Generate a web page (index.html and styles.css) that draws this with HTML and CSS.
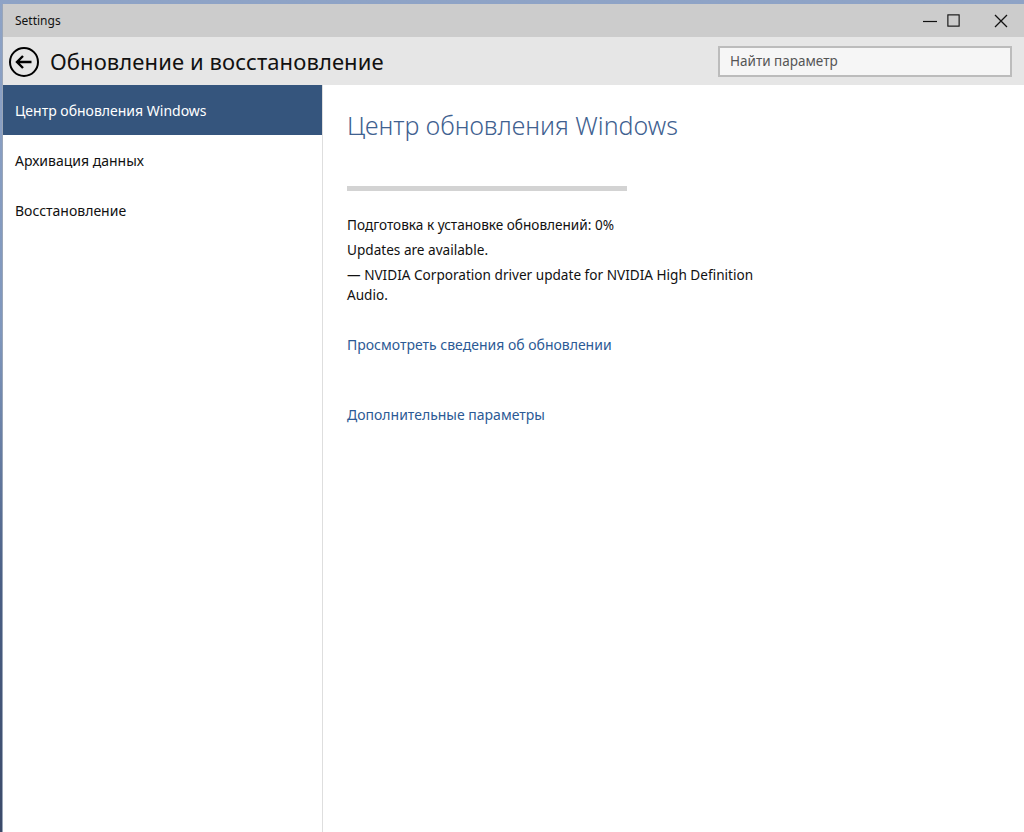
FILE: index.html
```html
<!DOCTYPE html>
<html lang="ru">
<head>
<meta charset="utf-8">
<title>Settings</title>
<link rel="stylesheet" href="styles.css">
</head>
<body>
<div class="desktop">
  <div class="window">
    <div class="titlebar">
      <span class="app-name">Settings</span>
      <div class="controls">
        <span class="ctl ctl-min"><svg width="16" height="16" viewBox="0 0 16 16"><path d="M1 8.5h14" stroke="#111" stroke-width="1.2"/></svg></span>
        <span class="ctl ctl-max"><svg width="15" height="15" viewBox="0 0 16 16"><rect x="2" y="2" width="12" height="12" fill="none" stroke="#111" stroke-width="1.2"/></svg></span>
        <span class="ctl ctl-close"><svg width="16" height="16" viewBox="0 0 16 16"><path d="M2 2L14 14M14 2L2 14" stroke="#111" stroke-width="1.3"/></svg></span>
      </div>
    </div>
    <div class="header">
      <span class="back"><svg width="32" height="32" viewBox="0 0 32 32"><circle cx="16" cy="16" r="14" fill="none" stroke="#000" stroke-width="2"/><path d="M23.5 16H9M15 10L9 16L15 22" fill="none" stroke="#000" stroke-width="2.4"/></svg></span>
      <h1 class="page-title">Обновление и восстановление</h1>
      <div class="search">Найти параметр</div>
    </div>
    <div class="main">
      <nav class="nav">
        <div class="nav-item active">Центр обновления Windows</div>
        <div class="nav-item">Архивация данных</div>
        <div class="nav-item">Восстановление</div>
      </nav>
      <section class="content">
        <h2 class="section-title">Центр обновления Windows</h2>
        <div class="progress"></div>
        <p class="status">Подготовка к установке обновлений: 0%</p>
        <p class="status">Updates are available.</p>
        <p class="status wrap">— NVIDIA Corporation driver update for NVIDIA High Definition Audio.</p>
        <a class="link link-first" href="#">Просмотреть сведения об обновлении</a>
        <a class="link link-second" href="#">Дополнительные параметры</a>
      </section>
    </div>
  </div>
</div>
</body>
</html>
```

FILE: styles.css
```css
html, body {
  margin: 0;
  padding: 0;
  height: 100%;
}
body {
  font-family: "Noto Sans", "Open Sans", sans-serif;
  color: #000;
  overflow: hidden;
}
.desktop {
  height: 832px;
  padding: 4px 0 0 2px;
  box-sizing: border-box;
  background: linear-gradient(180deg, #8ea3c6 0%, #7f97bd 40%, #4a5f85 70%, #3b4a69 100%);
}
.window {
  height: 100%;
  display: flex;
  flex-direction: column;
  background: #fff;
  border-left: 1px solid #9aa6b8;
}
.titlebar {
  height: 33px;
  flex: none;
  background: #cccccc;
  display: flex;
  align-items: center;
  justify-content: space-between;
}
.app-name {
  font-size: 12px;
  padding-left: 12px;
  color: #111;
}
.controls {
  display: flex;
  height: 100%;
}
.ctl {
  display: flex;
  align-items: center;
  justify-content: center;
}
.ctl svg { display: block; }
.ctl-min { width: 16px; }
.ctl-max { width: 30px; margin-right: 10px; }
.ctl-close { width: 46px; }
.header {
  height: 48px;
  flex: none;
  background: #e6e6e6;
  display: flex;
  align-items: center;
}
.back {
  width: 32px;
  height: 32px;
  margin: 1px 0 0 5px;
  display: flex;
}
.page-title {
  margin: 0 0 0 10px;
  font-size: 22px;
  font-weight: 400;
  color: #111;
  flex: 1;
  letter-spacing: 0.1px;
}
.search {
  width: 280px;
  height: 27px;
  margin: 0 12px 0 0;
  border: 2px solid #bcbcbc;
  background: #f6f6f6;
  color: #555;
  font-size: 13.5px;
  line-height: 27px;
  padding-left: 10px;
}
.main {
  flex: 1;
  display: flex;
}
.nav {
  width: 319px;
  flex: none;
  border-right: 1px solid #dedede;
}
.nav-item {
  height: 50px;
  line-height: 51px;
  padding-left: 12px;
  font-size: 14px;
  color: #111;
}
.nav-item.active {
  background: #35557d;
  color: #fff;
}
.content {
  padding-left: 24px;
  flex: 1;
}
.section-title {
  margin: 19px 0 0;
  font-size: 25px;
  font-weight: 300;
  color: #3f6190;
  line-height: 42px;
}
.progress {
  width: 280px;
  height: 5px;
  margin-top: 40px;
  background: #d3d3d3;
}
.status {
  margin: 0;
  font-size: 13.6px;
  line-height: 20px;
  color: #111;
  max-width: 420px;
}
.progress + .status { margin-top: 24px; }
.status + .status { margin-top: 5px; }
.link {
  display: block;
  color: #2c5a95;
  text-decoration: none;
  font-size: 14px;
  line-height: 20px;
}
.link-first { margin-top: 30px; }
.link-second { margin-top: 50px; }
```
